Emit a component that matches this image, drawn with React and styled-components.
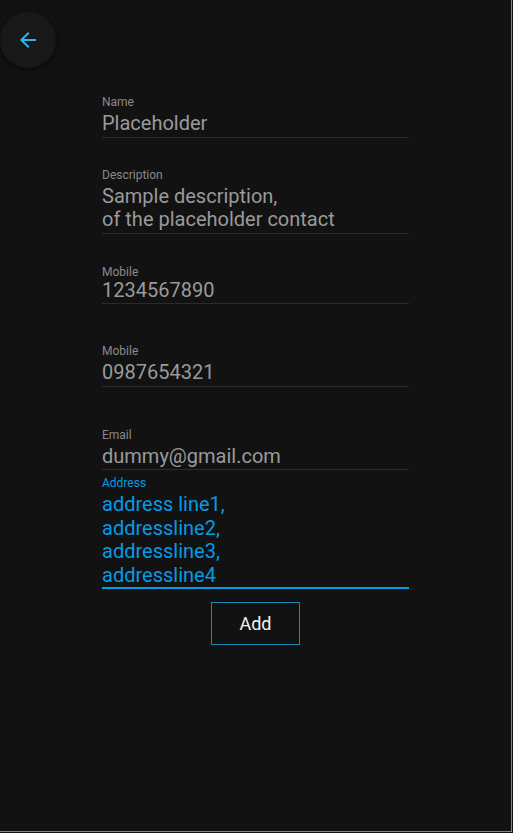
import React from "react";
import styled, { createGlobalStyle } from "styled-components";

const GlobalStyle = createGlobalStyle`
  html, body {
    margin: 0;
    padding: 0;
    background: #121212;
  }
  body {
    font-family: Roboto, "Noto Sans", "Liberation Sans", sans-serif;
  }
`;

const ACCENT = "#039be5";

const Page = styled.div`
  box-sizing: border-box;
  width: 512px;
  height: 832px;
  background: #121212;
  border-right: 1px solid #1ea8dd;
  border-bottom: 1px solid #1ea8dd;
  display: flex;
  flex-direction: column;
`;

const Header = styled.div`
  display: flex;
  padding-top: 12px;
  height: 56px;
`;

const BackButton = styled.button`
  width: 56px;
  height: 56px;
  border-radius: 50%;
  border: none;
  padding: 0;
  background: #181818;
  box-shadow: 0 1px 6px rgba(0, 0, 0, 0.55);
  display: flex;
  align-items: center;
  justify-content: center;
  cursor: pointer;
`;

const Form = styled.form`
  width: 307px;
  margin: 27px auto 0;
  display: flex;
  flex-direction: column;
`;

const Field = styled.div`
  display: flex;
  flex-direction: column;
  margin-top: ${p => p.$gap || 0}px;
  border-bottom: ${p => (p.$active ? `2px solid ${ACCENT}` : "1px solid #2b2b2b")};
  padding-bottom: ${p => (p.$active ? 0 : 1)}px;
`;

const Label = styled.label`
  font-size: 12px;
  line-height: 14px;
  margin-bottom: ${p => (p.$tight ? 0 : 3)}px;
  color: ${p => (p.$active ? ACCENT : "#8a8a8a")};
`;

const Value = styled.div`
  font-size: 20px;
  line-height: 23.5px;
  color: ${p => (p.$active ? ACCENT : "#9a9a9a")};
  white-space: pre-line;
`;

const Actions = styled.div`
  display: flex;
  justify-content: center;
  margin-top: 13px;
`;

const AddButton = styled.button`
  box-sizing: border-box;
  width: 89px;
  height: 43px;
  background: transparent;
  border: 1px solid #1b86b8;
  border-radius: 0;
  color: #f2f2f2;
  font-family: Roboto, "Noto Sans", sans-serif;
  font-size: 18px;
  cursor: pointer;
`;

const fields = [
  { label: "Name", value: "Placeholder", gap: 0 },
  { label: "Description", value: "Sample description,\nof the placeholder contact", gap: 30 },
  { label: "Mobile", value: "1234567890", gap: 31, tight: true },
  { label: "Mobile", value: "0987654321", gap: 40 },
  { label: "Email", value: "dummy@gmail.com", gap: 41 },
  { label: "Address", value: "address line1,\naddressline2,\naddressline3,\naddressline4", gap: 6, active: true },
];

export default function App() {
  return (
    <>
      <GlobalStyle />
      <Page>
        <Header>
          <BackButton aria-label="back">
            <svg width="24" height="24" viewBox="0 0 24 24" fill="#29b6f6">
              <path d="M20 11H7.83l5.59-5.59L12 4l-8 8 8 8 1.41-1.41L7.83 13H20v-2z" />
            </svg>
          </BackButton>
        </Header>
        <Form onSubmit={e => e.preventDefault()}>
          {fields.map((f, i) => (
            <Field key={i} $gap={f.gap} $active={f.active}>
              <Label $active={f.active} $tight={f.tight}>{f.label}</Label>
              <Value $active={f.active}>{f.value}</Value>
            </Field>
          ))}
          <Actions>
            <AddButton type="submit">Add</AddButton>
          </Actions>
        </Form>
      </Page>
    </>
  );
}
